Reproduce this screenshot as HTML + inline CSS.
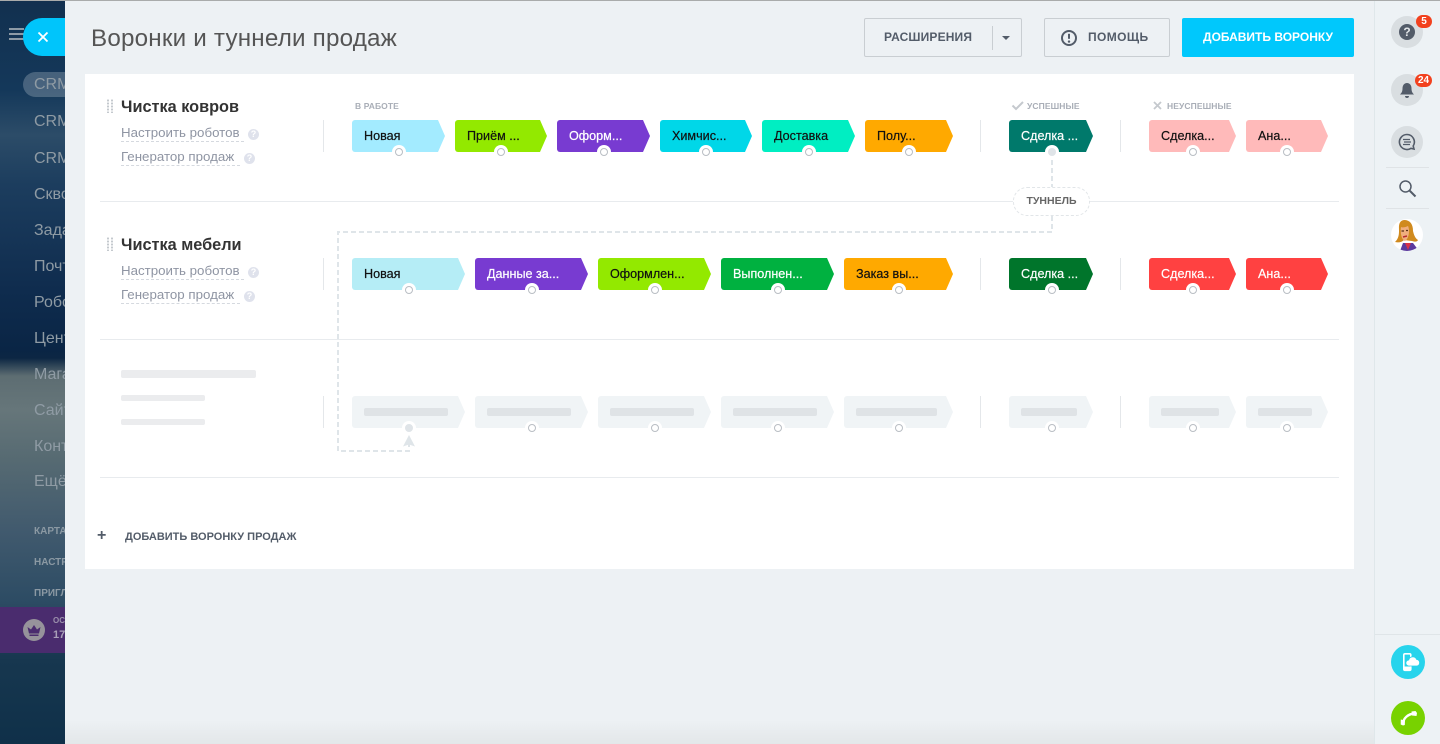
<!DOCTYPE html>
<html lang="ru"><head><meta charset="utf-8"><title>Воронки и туннели продаж</title>
<style>
html,body{margin:0;padding:0;width:1440px;height:744px;overflow:hidden;background:#edf1f4}
body{position:relative;font-family:"Liberation Sans","DejaVu Sans",sans-serif}
div,span,a{position:absolute;white-space:nowrap;box-sizing:border-box}
#side{left:0;top:0;width:65px;height:744px;overflow:hidden;background:linear-gradient(180deg,#12304f 0,#14385a 90px,#2c4c68 135px,#1c3d5e 185px,#0f2c4e 290px,#0a2545 350px,#0c2643 358px,#5d6d72 376px,#66767a 410px,#566a72 460px,#415a6e 530px,#2d4c64 600px,#17374f 660px,#0f3049 744px)}
#side .n{left:34px;font-size:16px;line-height:20px;color:#8f9ba4}
#side .s{left:34px;font-size:10px;font-weight:bold;line-height:12px;color:#8b99a3}
#main{left:65px;top:0;width:1309px;height:744px;background:linear-gradient(180deg,#edf1f4 0,#edf1f4 720px,#e3e7e9 744px)}
#top{left:0;top:0;width:1440px;height:1px;background:#a9abab;z-index:5}
#right{left:1374px;top:0;width:66px;height:744px;background:#edf2f5;border-left:1px solid #dfe7ea}
.c{width:93px;height:32px;top:120px;border-radius:3px;font-size:12.6px;line-height:32px;padding-left:12px;color:#111;-webkit-text-stroke:.2px currentColor;clip-path:polygon(0 0,calc(100% - 7px) 0,100% 50%,calc(100% - 7px) 100%,0 100%)}
.w{color:#fff}
.d{width:14px;height:14px;border-radius:50%;background:#fff;z-index:2}
.d:after{content:"";position:absolute;left:3px;top:3px;width:8px;height:8px;box-sizing:border-box;border:1px solid #b9bec4;border-radius:50%;background:#fff}
.f:after{background:#dfe4e8;border-color:#dfe4e8}
.v{width:1px;height:32px;background:#e4e7ea}
.h{left:100px;width:1239px;height:1px;background:#e8ebee}
.t{left:121px;font-size:16.3px;font-weight:bold;line-height:20px;color:#333}
.l{left:121px;font-size:13.3px;line-height:16px;height:17px;color:#8f95a3;border-bottom:1px dashed #d5d9df}
.q{width:11px;height:11px;border-radius:50%;background:#dfe2ec;color:#fff;font-size:9px;font-weight:bold;line-height:11px;text-align:center}
.g{width:7px;height:14px;background-image:radial-gradient(circle,#c4c9ce 1px,transparent 1.2px);background-size:4px 3px}
.cap{font-size:8.5px;font-weight:bold;color:#a9aeb7;line-height:10px;top:101px;letter-spacing:.1px}
.sk{background:#f0f4f6;top:396px}
.b{height:8px;top:408px;background:#dfe3e6;border-radius:2px;z-index:1}
.sb{background:#ebecee;border-radius:2px;left:121px}
.btn{top:18px;height:39px;border:1px solid #c9ced2;border-radius:2px;font-size:12px;font-weight:bold;color:#535c69;line-height:37px;letter-spacing:.2px}
.cr{left:1391px;width:32px;height:32px;border-radius:50%;background:#d9dee1}
.bd{background:#f2411e;color:#fff;font-size:10px;font-weight:bold;border-radius:8px;height:13px;line-height:13px;text-align:center;z-index:3}
</style></head><body>
<div id="top"></div>
<div id="side">
<div style="left:9px;top:28px;width:15px;height:2px;background:#8d9aa6"></div>
<div style="left:9px;top:33px;width:15px;height:2px;background:#8d9aa6"></div>
<div style="left:9px;top:38px;width:15px;height:2px;background:#8d9aa6"></div>
<div style="left:23px;top:72px;width:60px;height:25px;border-radius:13px;background:rgba(255,255,255,.22)"></div>
<div class="n" style="top:75px">CRM</div>
<div class="n" style="top:112px">CRM</div>
<div class="n" style="top:149px">CRM</div>
<div class="n" style="top:185px">Сквозная</div>
<div class="n" style="top:221px">Задачи</div>
<div class="n" style="top:257px">Почта</div>
<div class="n" style="top:293px">Роботы</div>
<div class="n" style="top:329px">Центр</div>
<div class="n" style="top:365px">Магазин</div>
<div class="n" style="top:401px">Сайты</div>
<div class="n" style="top:437px">Контакт</div>
<div class="n" style="top:472px">Ещё</div>
<div class="s" style="top:526px">КАРТА</div>
<div class="s" style="top:557px">НАСТРОЙКИ</div>
<div class="s" style="top:588px">ПРИГЛАСИТЬ</div>
<div style="left:0;top:607px;width:65px;height:46px;background:#4a2c6e"></div>
<div style="left:23px;top:619px;width:22px;height:22px;border-radius:50%;background:#96939b"></div>
<svg style="position:absolute;left:23px;top:619px" width="22" height="22" viewBox="0 0 22 22"><path d="M4.500 8l3.500 2.500L11 6l3 4.500L17.500 8l-1.500 6.500H6z" fill="#4a2c6e"/><path d="M6.500 15.500h9V17h-9z" fill="#4a2c6e"/></svg>
<div style="left:53px;top:616px;font-size:8px;font-weight:bold;color:#9b90ac">ОС</div>
<div style="left:53px;top:629px;font-size:11px;font-weight:bold;color:#a99fb8">17</div>
</div>
<div style="left:23px;top:18px;width:42px;height:38px;background:#00c5fb;border-radius:19px 0 0 19px;z-index:3"></div>
<svg style="position:absolute;left:37px;top:31px;z-index:4" width="12" height="12" viewBox="0 0 12 12"><path d="M1.500 1.500l9 9M10.500 1.500l-9 9" stroke="#fff" stroke-width="1.800"/></svg>
<div id="main"></div>
<div id="right"></div>

<div style="left:91px;top:23px;font-size:24.2px;line-height:32px;color:#555;letter-spacing:.2px">Воронки и туннели продаж</div>

<div class="btn" style="left:864px;width:158px"></div>
<div style="left:884px;top:18px;font-size:12px;font-weight:bold;color:#535c69;line-height:39px;letter-spacing:.15px">РАСШИРЕНИЯ</div>
<div style="left:992px;top:26px;width:1px;height:24px;background:#c9ced2"></div>
<div style="left:1002px;top:36px;width:0;height:0;border:4px solid transparent;border-top:4px solid #535c69;border-bottom:0"></div>
<div class="btn" style="left:1044px;width:126px"></div>
<svg style="position:absolute;left:1060px;top:29px" width="18" height="18" viewBox="0 0 18 18"><circle cx="9" cy="9" r="7" fill="none" stroke="#535c69" stroke-width="2"/><path d="M9 4.800v5" stroke="#535c69" stroke-width="2"/><circle cx="9" cy="12.600" r="1.200" fill="#535c69"/></svg>
<div style="left:1088px;top:18px;font-size:12px;font-weight:bold;color:#535c69;line-height:39px;letter-spacing:.4px">ПОМОЩЬ</div>
<div style="left:1182px;top:18px;width:172px;height:39px;background:#00c8fc;border-radius:2px;font-size:12px;font-weight:bold;color:#fff;line-height:39px;text-align:center;letter-spacing:0">ДОБАВИТЬ ВОРОНКУ</div>

<div style="left:85px;top:74px;width:1269px;height:495px;background:#fff"></div>

<div class="h" style="top:201px"></div><div class="h" style="top:339px"></div><div class="h" style="top:477px"></div>

<div class="g" style="left:106px;top:99px"></div>
<div class="t" style="top:97px">Чистка ковров</div>
<div class="l" style="top:125px;width:123px">Настроить роботов</div>
<div class="q" style="left:248px;top:129px">?</div>
<div class="l" style="top:149px;width:119px">Генератор продаж</div>
<div class="q" style="left:244px;top:153px">?</div>

<div class="g" style="left:106px;top:237px"></div>
<div class="t" style="top:235px">Чистка мебели</div>
<div class="l" style="top:263px;width:123px">Настроить роботов</div>
<div class="q" style="left:248px;top:267px">?</div>
<div class="l" style="top:287px;width:119px">Генератор продаж</div>
<div class="q" style="left:244px;top:291px">?</div>

<div class="sb" style="top:370px;width:135px;height:8px"></div>
<div class="sb" style="top:395px;width:84px;height:6px"></div>
<div class="sb" style="top:419px;width:84px;height:6px"></div>

<div class="v" style="left:323px;top:120px"></div><div class="v" style="left:980px;top:120px"></div><div class="v" style="left:1120px;top:120px"></div>
<div class="v" style="left:323px;top:258px"></div><div class="v" style="left:980px;top:258px"></div><div class="v" style="left:1120px;top:258px"></div>
<div class="v" style="left:323px;top:396px"></div><div class="v" style="left:980px;top:396px"></div><div class="v" style="left:1120px;top:396px"></div>

<div class="cap" style="left:355px">В РАБОТЕ</div>
<svg style="position:absolute;left:1011px;top:100px" width="13" height="11" viewBox="0 0 13 11"><path d="M1.500 5.500l3.500 3.500 7-7" fill="none" stroke="#c5c9ce" stroke-width="2"/></svg>
<div class="cap" style="left:1027px">УСПЕШНЫЕ</div>
<svg style="position:absolute;left:1153px;top:101px" width="9" height="9" viewBox="0 0 9 9"><path d="M1 1l7 7M8 1L1 8" stroke="#c5c9ce" stroke-width="1.800"/></svg>
<div class="cap" style="left:1167px">НЕУСПЕШНЫЕ</div>

<div class="c" style="left:352px;width:93px;background:#a3ebff">Новая</div>
<div class="c" style="left:455px;width:92px;background:#93e900">Приём ...</div>
<div class="c w" style="left:557px;width:93px;background:#783bd1">Оформ...</div>
<div class="c" style="left:660px;width:92px;background:#00d7e8">Химчис...</div>
<div class="c" style="left:762px;width:93px;background:#00eec2">Доставка</div>
<div class="c" style="left:865px;width:88px;background:#ffa900">Полу...</div>
<div class="c w" style="left:1009px;width:84px;background:#00796b">Сделка ...</div>
<div class="c" style="left:1149px;width:87px;background:#ffbaba">Сделка...</div>
<div class="c" style="left:1246px;width:82px;background:#ffbaba">Ана...</div>

<div class="c" style="top:258px;left:352px;width:113px;background:#b5edf6">Новая</div>
<div class="c w" style="top:258px;left:475px;width:113px;background:#783bd1">Данные за...</div>
<div class="c" style="top:258px;left:598px;width:113px;background:#93e900">Оформлен...</div>
<div class="c w" style="top:258px;left:721px;width:113px;background:#00b140">Выполнен...</div>
<div class="c" style="top:258px;left:844px;width:109px;background:#ffa900">Заказ вы...</div>
<div class="c w" style="top:258px;left:1009px;width:84px;background:#00752b">Сделка ...</div>
<div class="c w" style="top:258px;left:1149px;width:87px;background:#ff4141">Сделка...</div>
<div class="c w" style="top:258px;left:1246px;width:82px;background:#ff4141">Ана...</div>

<div class="c sk" style="left:352px;width:113px"></div><div class="b" style="left:364px;width:84px"></div>
<div class="c sk" style="left:475px;width:113px"></div><div class="b" style="left:487px;width:84px"></div>
<div class="c sk" style="left:598px;width:113px"></div><div class="b" style="left:610px;width:84px"></div>
<div class="c sk" style="left:721px;width:113px"></div><div class="b" style="left:733px;width:84px"></div>
<div class="c sk" style="left:844px;width:109px"></div><div class="b" style="left:856px;width:81px"></div>
<div class="c sk" style="left:1009px;width:84px"></div><div class="b" style="left:1021px;width:56px"></div>
<div class="c sk" style="left:1149px;width:87px"></div><div class="b" style="left:1161px;width:58px"></div>
<div class="c sk" style="left:1246px;width:82px"></div><div class="b" style="left:1258px;width:54px"></div>

<svg style="position:absolute;left:0;top:0;z-index:1" width="1440" height="744"><path d="M1052 152V232H338V451H409V444" fill="none" stroke="#dfe5e9" stroke-width="2" stroke-dasharray="5 3"/><path d="M409 435l6 11.500-6-2-6 2z" fill="#dfe5e9"/></svg>

<div class="d" style="left:392px;top:145px"></div><div class="d" style="left:494px;top:145px"></div><div class="d" style="left:597px;top:145px"></div><div class="d" style="left:699px;top:145px"></div><div class="d" style="left:802px;top:145px"></div><div class="d" style="left:902px;top:145px"></div><div class="d f" style="left:1045px;top:145px"></div><div class="d" style="left:1186px;top:145px"></div><div class="d" style="left:1280px;top:145px"></div>
<div class="d" style="left:402px;top:283px"></div><div class="d" style="left:525px;top:283px"></div><div class="d" style="left:648px;top:283px"></div><div class="d" style="left:771px;top:283px"></div><div class="d" style="left:892px;top:283px"></div><div class="d" style="left:1045px;top:283px"></div><div class="d" style="left:1186px;top:283px"></div><div class="d" style="left:1280px;top:283px"></div>
<div class="d f" style="left:402px;top:421px"></div><div class="d" style="left:525px;top:421px"></div><div class="d" style="left:648px;top:421px"></div><div class="d" style="left:771px;top:421px"></div><div class="d" style="left:892px;top:421px"></div><div class="d" style="left:1045px;top:421px"></div><div class="d" style="left:1186px;top:421px"></div><div class="d" style="left:1280px;top:421px"></div>

<div style="left:1013px;top:187px;width:77px;height:29px;background:#fff;border:1px dashed #e1e5e8;border-radius:14px;font-size:10.500px;font-weight:bold;color:#666;line-height:27px;text-align:center;z-index:3">ТУННЕЛЬ</div>

<div style="left:97px;top:530px;font-size:16px;font-weight:bold;line-height:12px;color:#535c69">+</div>
<div style="left:125px;top:530px;font-size:11px;font-weight:bold;color:#535c69;line-height:14px">ДОБАВИТЬ ВОРОНКУ ПРОДАЖ</div>

<div class="cr" style="top:16px"></div>
<div style="left:1399px;top:24px;width:16px;height:16px;border-radius:50%;background:#535c69;color:#e4e7e9;font-size:12px;font-weight:bold;line-height:16px;text-align:center">?</div>
<div class="bd" style="left:1416px;top:15px;width:16px">5</div>
<div class="cr" style="top:74px"></div>
<svg style="position:absolute;left:1399px;top:82px" width="16" height="17" viewBox="0 0 16 17"><path d="M8 1c3 0 4.500 2.500 4.500 5.500 0 3 1 4.500 2.500 6H1c1.500-1.500 2.500-3 2.500-6C3.500 3.500 5 1 8 1z" fill="#535c69"/><path d="M6 14h4c0 1.200-.8 2-2 2s-2-.8-2-2z" fill="#535c69"/></svg>
<div class="bd" style="left:1415px;top:74px;width:17px">24</div>
<div class="cr" style="top:126px"></div>
<svg style="position:absolute;left:1398px;top:133px" width="18" height="18" viewBox="0 0 18 18"><path d="M9 1.500a7.500 7.500 0 1 0 4 13.800l3 .7-.8-3A7.500 7.500 0 0 0 9 1.500z" fill="none" stroke="#535c69" stroke-width="1.600"/><path d="M5 6.500h7M6 9h7M5 11.500h7" stroke="#535c69" stroke-width="1.300"/></svg>
<div style="left:1386px;top:167px;width:43px;height:1px;background:#dfe3e6"></div>
<svg style="position:absolute;left:1398px;top:179px" width="19" height="19" viewBox="0 0 19 19"><circle cx="7.500" cy="7.500" r="5.500" fill="none" stroke="#535c69" stroke-width="1.500"/><path d="M11.500 11.500l6 6" stroke="#535c69" stroke-width="2"/></svg>
<div style="left:1386px;top:208px;width:43px;height:1px;background:#dfe3e6"></div>
<svg style="position:absolute;left:1391px;top:219px" width="32" height="32" viewBox="0 0 32 32"><defs><clipPath id="av"><circle cx="16" cy="16" r="16"/></clipPath></defs><circle cx="16" cy="16" r="16" fill="#fff"/><g clip-path="url(#av)"><path d="M9 32l3-8h10l6 8z" fill="#5b3a9e"/><path d="M14 24l3 7 3-7z" fill="#d8324a"/><path d="M13 1C7 2 8 8 8 12c0 5-1 8-4 11 4 1 7 0 9-2l8 1c3 1 5 1 6-1-3-2-4-5-5-9 0-7-3-11-9-11z" fill="#d08a1e"/><path d="M10 8c2 1 5 0 7-1 2 4 1 13-3 15-3-1-5-7-4-14z" fill="#f0ae7e"/><path d="M12 18l4-1" stroke="#b52b32" stroke-width="1.500"/><path d="M10.500 12h2.500M15 11.500h2" stroke="#5a3218" stroke-width="1.200"/></g></svg>
<div style="left:1375px;top:634px;width:65px;height:1px;background:#dfe5e8"></div>
<div style="left:1391px;top:645px;width:34px;height:34px;border-radius:50%;background:#27d4ec"></div>
<svg style="position:absolute;left:1391px;top:645px" width="34" height="34" viewBox="0 0 34 34"><rect x="12.800" y="8.800" width="7" height="16.500" rx="1.200" fill="none" stroke="#fff" stroke-width="1.600"/><rect x="12.800" y="21.500" width="7" height="3.800" fill="#fff"/><path d="M18 21a3 3 0 0 1-.3-6 4.200 4.200 0 0 1 8-.5 3.300 3.300 0 0 1 .3 6.500z" fill="#fff" stroke="#27d4ec" stroke-width=".8"/></svg>
<div style="left:1391px;top:701px;width:34px;height:34px;border-radius:50%;background:#78d200"></div>
<svg style="position:absolute;left:1391px;top:701px" width="34" height="34" viewBox="0 0 34 34"><path d="M12 22.500C12.500 17 17 13 23.500 12.500" fill="none" stroke="#fff" stroke-width="2.400"/><path d="M9.800 18.500l4.200 1-.2 4.500-1.800.5-2.300-1z" fill="#fff"/><path d="M20.500 10.500l4-.5 1.500 2-.5 3-4.500-.5z" fill="#fff"/></svg>
</body></html>
